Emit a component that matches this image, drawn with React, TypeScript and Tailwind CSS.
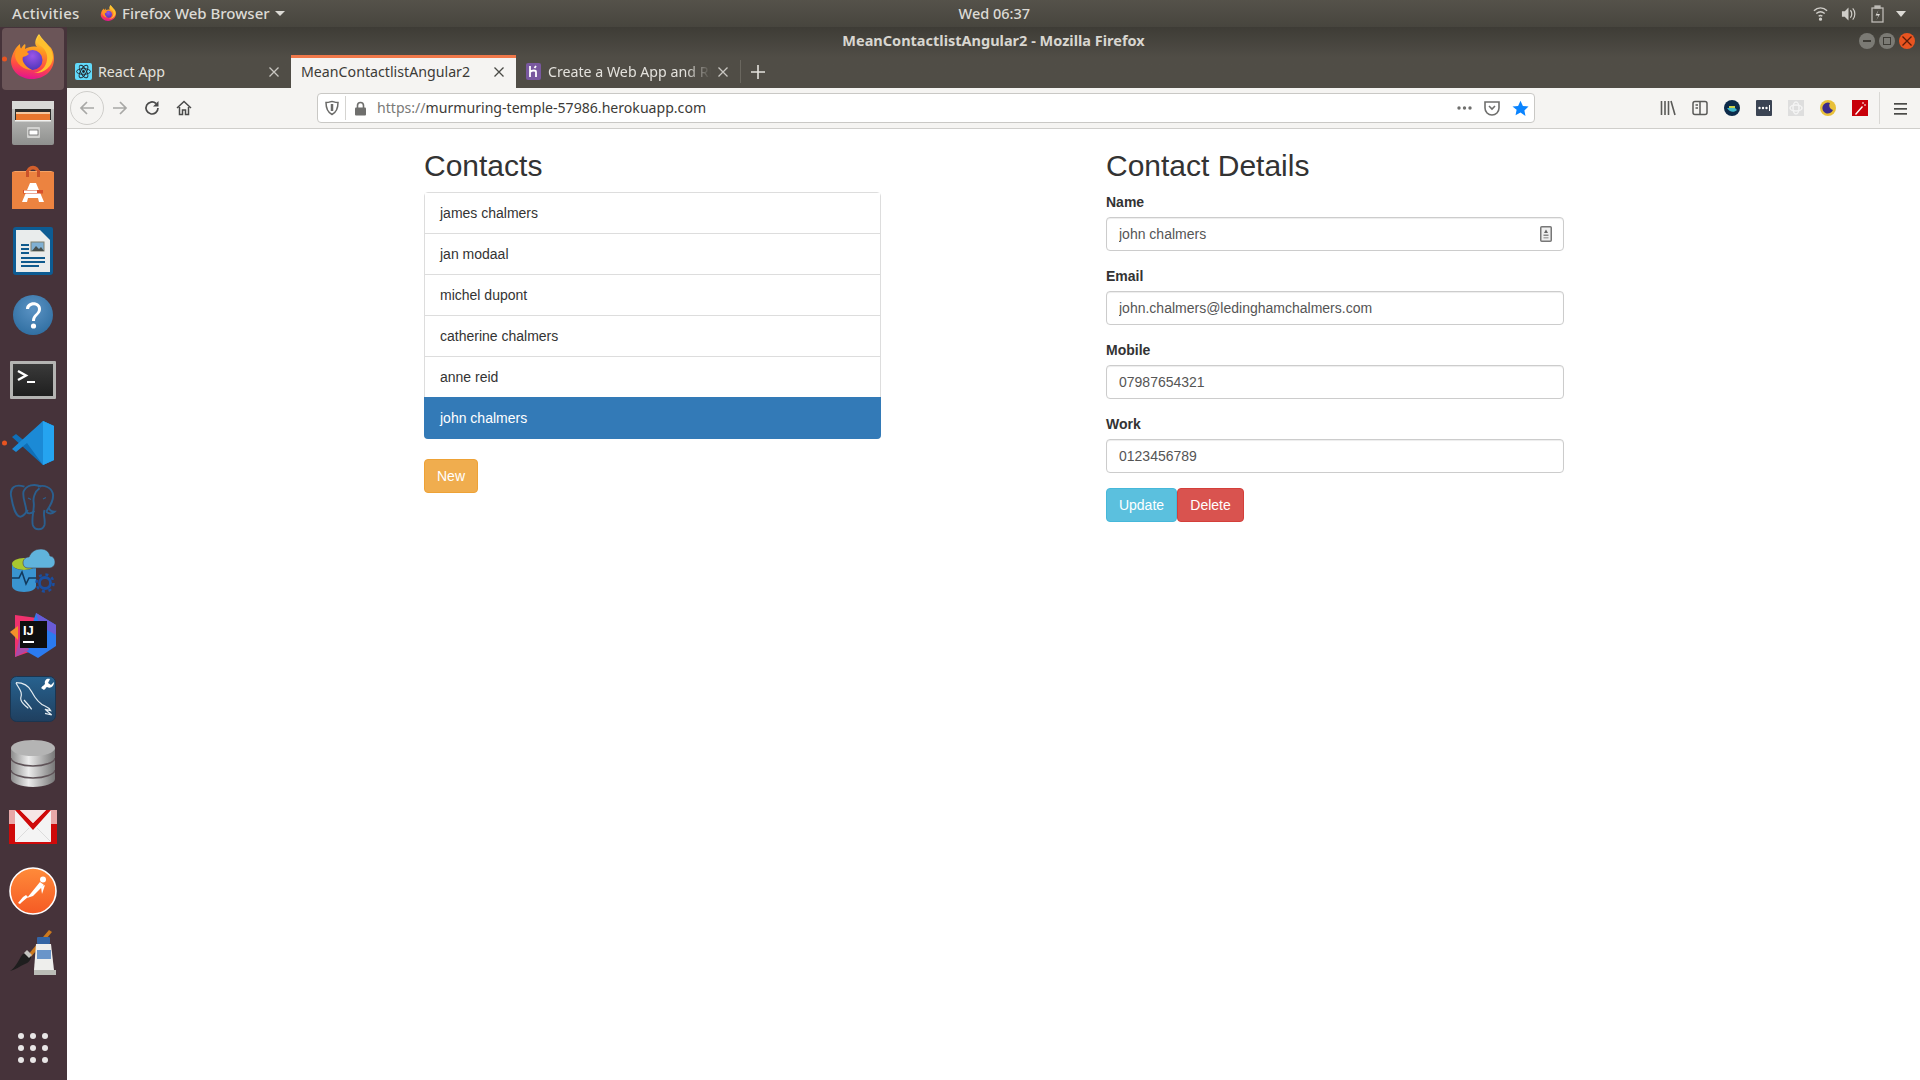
import type { ReactNode } from 'react'

const contacts = ['james chalmers', 'jan modaal', 'michel dupont', 'catherine chalmers', 'anne reid']

const fields = [
  { label: 'Name', value: 'john chalmers' },
  { label: 'Email', value: 'john.chalmers@ledinghamchalmers.com' },
  { label: 'Mobile', value: '07987654321' },
  { label: 'Work', value: '0123456789' },
]

function FirefoxIcon({ size }: { size: number }) {
  const id = `ff${size}`
  return (
    <svg width={size} height={size} viewBox="0 0 48 48">
      <defs>
        <linearGradient id={`${id}a`} x1="0.6" y1="0" x2="0.45" y2="1">
          <stop offset="0" stopColor="#ffe04a" />
          <stop offset="0.35" stopColor="#ff9a1f" />
          <stop offset="0.72" stopColor="#ff4a45" />
          <stop offset="1" stopColor="#e3148e" />
        </linearGradient>
        <radialGradient id={`${id}b`} cx="0.5" cy="0.3" r="0.75">
          <stop offset="0" stopColor="#9a55e8" />
          <stop offset="1" stopColor="#4a35b8" />
        </radialGradient>
      </defs>
      <path
        d="M30 0C26 5 25 10 28 13c-4-1-9 0-12 2 0-2 1-3 0-5-2 1-3 3-4 5-1-2-1-4-1-5C7 13 3 19 2 27c0 10 9 18 21 18 13 0 22-9 22-20 0-6-2-11-5-13C37 8 33 5 30 0z"
        fill={`url(#${id}a)`}
      />
      <circle cx="23.500" cy="26" r="10" fill={`url(#${id}b)`} />
      <path d="M9 14c3 0 6 1 8 3l3 3c-2 2-5 3-7 3 0 5 4 10 10 13-8 0-16-6-17-14 0-3 1-6 3-8z" fill="#ff9422" />
      <path d="M30 11c6 3 9 9 8 15-1 7-6 12-13 13 9 1 18-6 19-15 0-6-3-11-7-14-2-2-5-5-7-9-2 3-2 7 0 10z" fill="#ffc02e" />
    </svg>
  )
}

function FilesIcon() {
  return (
    <svg width="42" height="44" viewBox="0 0 42 44">
      <defs>
        <linearGradient id="filesBody" x1="0" y1="0" x2="0" y2="1">
          <stop offset="0" stopColor="#c9c9c7" />
          <stop offset="1" stopColor="#8f908e" />
        </linearGradient>
      </defs>
      <rect x="0" y="0" width="42" height="44" rx="2" fill="url(#filesBody)" />
      <rect x="0" y="0" width="42" height="8" fill="#d9d9d7" />
      <rect x="3" y="8" width="36" height="11" fill="#2d2c2a" />
      <rect x="4" y="11" width="34" height="2" fill="#f6c79e" />
      <rect x="4" y="13" width="34" height="6" fill="#e8762d" />
      <rect x="3" y="19" width="36" height="1.500" fill="#f1f1ef" />
      <rect x="15" y="26" width="13" height="11" rx="1" fill="#d2d2d0" />
      <rect x="17" y="29" width="9" height="5" fill="#fff" stroke="#555" strokeWidth="0.7" />
    </svg>
  )
}

function SoftwareIcon() {
  return (
    <svg width="42" height="44" viewBox="0 0 42 44">
      <path d="M14 9c0-11 14-11 14 0v5h-3V9c0-6-8-6-8 0v5h-3z" fill="#d25f2c" />
      <rect x="0" y="7" width="42" height="37" fill="#ec8340" />
      <path d="M0 7l3-1h36l3 1z" fill="#f5a264" />
      <path d="M14 5h3v7h-3zM25 5h3v7h-3z" fill="#c9522a" />
      <path d="M18 18h6l8 19h-5l-1-4H16l-1 4h-5z" fill="#fff" />
      <rect x="11" y="25" width="20" height="3.500" fill="#d8502a" />
      <rect x="12" y="25.500" width="13" height="2.500" fill="#fff" />
    </svg>
  )
}

function WriterIcon() {
  return (
    <svg width="40" height="48" viewBox="0 0 40 48">
      <path d="M3 0h26l11 11v34a3 3 0 0 1-3 3H3a3 3 0 0 1-3-3V3a3 3 0 0 1 3-3z" fill="#0d5c93" />
      <path d="M28 0l12 12V2a2 2 0 0 0-2-2z" fill="#0d5c93" />
      <path d="M3 3h24l10 10v32H3z" fill="#e9ecec" />
      <rect x="8" y="17" width="8" height="2" fill="#0f5a8d" />
      <rect x="8" y="21" width="8" height="2" fill="#0f5a8d" />
      <rect x="8" y="25" width="8" height="2" fill="#0f5a8d" />
      <rect x="18" y="15" width="13" height="9" fill="#7fb0d4" stroke="#80806f" />
      <path d="M19 24l4-5 3 3 2-2 3 4z" fill="#47504e" />
      <rect x="8" y="30" width="24" height="2" fill="#0f5a8d" />
      <rect x="8" y="34" width="24" height="2" fill="#0f5a8d" />
      <rect x="8" y="38" width="18" height="2" fill="#0f5a8d" />
    </svg>
  )
}

function HelpIcon() {
  return (
    <svg width="40" height="40" viewBox="0 0 40 40">
      <defs>
        <radialGradient id="helpFill" cx="0.5" cy="0.35" r="0.7">
          <stop offset="0" stopColor="#5b93c4" />
          <stop offset="1" stopColor="#2e6da0" />
        </radialGradient>
      </defs>
      <circle cx="20" cy="20" r="20" fill="url(#helpFill)" />
      <path d="M13 14c0-9 15-9 15 0 0 6-6 6-6 12h-3c0-7 6-7 6-12 0-5-8-5-9 0z" fill="#fff" />
      <circle cx="20.500" cy="31" r="2.600" fill="#fff" />
    </svg>
  )
}

function TerminalIcon() {
  return (
    <svg className="mt-[2px]" width="46" height="38" viewBox="0 0 46 38">
      <defs>
        <linearGradient id="termFill" x1="0" y1="0" x2="0" y2="1">
          <stop offset="0" stopColor="#3a3a3a" />
          <stop offset="1" stopColor="#1f1f1f" />
        </linearGradient>
      </defs>
      <rect width="46" height="38" rx="1" fill="#b4b4b2" />
      <rect x="3" y="3" width="40" height="32" fill="url(#termFill)" />
      <path d="M8 10l8 4.500-8 4.500" stroke="#fff" strokeWidth="2.400" fill="none" />
      <rect x="17" y="20" width="8" height="2" fill="#fff" />
    </svg>
  )
}

function VsCodeIcon() {
  return (
    <svg width="42" height="44" viewBox="0 0 42 44">
      <path d="M31 0l11 5v34l-11 5L0 16l4-3 11 9z" fill="#0f6fb8" />
      <path d="M31 44l11-5V5L31 0 0 28l4 3 11-9z" fill="#1b8ad6" />
      <path d="M31 0l11 5v34l-11 5z" fill="#25a4f0" />
    </svg>
  )
}

function PostgresIcon() {
  return (
    <svg width="46" height="46" viewBox="0 0 46 46" fill="none" stroke="#2b5f8e" strokeWidth="1.900" overflow="visible">
      <path d="M14.500 2.700C4.500-.7-.5 4.300 1.200 12.700 2.800 22.700 6.200 32.700 10.200 32.700 13.500 32.700 15.500 29.300 17.800 26" />
      <path d="M31.200 2.700C24.500-.7 16.200 1 13.500 7.700 12.200 14.300 16.200 21 16.200 26 16.200 30.300 21.200 30.300 24.500 27" />
      <path d="M27.800 2.700C34.500.3 41.200 3.700 42.800 9.300 44.500 16 39.500 22.700 36.200 27.700" />
      <path d="M29.500 4.300C24.500 7.700 22.800 14.300 23.800 19.300 24.500 24.300 21.200 34.300 22.800 41 24.500 46.700 32.800 46.700 34.500 41 35.500 34.300 32.800 31 34.500 26" />
      <path d="M36.200 27.700C39.500 30.300 42.800 29.300 44.500 27.700 41.200 27.700 39.500 26 38.800 23.700" />
      <path d="M18 14l3 1.500" strokeWidth="1.200" />
      <path d="M33 15l3-1.500" strokeWidth="1.200" />
    </svg>
  )
}

function AzureDataIcon() {
  return (
    <svg width="44" height="44" viewBox="0 0 44 44">
      <ellipse cx="13" cy="15" rx="12" ry="6" fill="#a9c72f" />
      <path d="M1 15c0 3 5 6 12 6s12-3 12-6v22c0 3-5 6-12 6S1 40 1 37z" fill="#3a94d0" />
      <path d="M1 29h7l3-6 4 12 3-6h7" stroke="#123a5e" strokeWidth="1.600" fill="none" />
      <path d="M12 14c0-4 3-6 6-6 2-5 6-8 12-8 5 0 8 3 9 7 3 0 5 3 5 6 0 4-3 6-6 6H17c-3 0-5-2-5-5z" fill="#60b3dc" stroke="#4d3a42" strokeWidth="0.6" />
      <circle cx="34" cy="34" r="5.500" fill="none" stroke="#1a4fa0" strokeWidth="2.800" />
      <circle cx="34" cy="34" r="8.500" fill="none" stroke="#1a4fa0" strokeWidth="2.500" strokeDasharray="3 3.700" />
    </svg>
  )
}

function IdeaIcon() {
  return (
    <svg width="46" height="46" viewBox="0 0 46 46">
      <path d="M5 3l22 3-8 34-14 5z" fill="#f0326e" />
      <path d="M26 1l20 12v21L28 46 14 38z" fill="#2b7bf0" />
      <path d="M26 1l20 12v10L30 14z" fill="#6a5bd6" />
      <path d="M0 20l8-6v14z" fill="#f2922a" />
      <path d="M5 45l6-25 8 18z" fill="#a94ba8" />
      <rect x="10" y="9" width="27" height="27" fill="#0e0e0e" />
      <text x="13" y="23" fill="#fff" fontSize="13" fontWeight="700" fontFamily="'Liberation Sans', sans-serif">IJ</text>
      <rect x="13" y="29" width="11" height="2" fill="#fff" />
    </svg>
  )
}

function WorkbenchIcon() {
  return (
    <svg width="46" height="46" viewBox="0 0 46 46">
      <defs>
        <linearGradient id="wbFill" x1="0" y1="0" x2="0" y2="1">
          <stop offset="0" stopColor="#27628f" />
          <stop offset="1" stopColor="#1f3f5f" />
        </linearGradient>
      </defs>
      <rect x="0.500" y="0.500" width="45" height="45" rx="6" fill="url(#wbFill)" stroke="#1b3550" />
      <g fill="none" stroke="#e3ebf0" strokeWidth="1.200">
        <path d="M6 6.700C11.700 6.700 18.300 9 21.700 15.700 25 22 28.300 27.300 35 30 38.300 31.300 40 33.300 40.700 34.700L35 33.300 41.700 39 35 37.300" />
        <path d="M6 6.700C8.300 12.300 13.300 15.700 10.700 22.300 10.700 27.300 15 29 18.300 32.300" />
        <path d="M14 24C16.700 27 20 30.700 21.700 33.300" />
      </g>
      <path d="M44 6l-3 3-3-2 2-4c-3-1-6 1-5 5L32 11l2 2 3-2c4 2 7-1 7-5z" fill="#fff" />
      <path d="M33 10l-2 2 3 2 2-2z" fill="#fff" />
    </svg>
  )
}

function DiskIcon() {
  return (
    <svg width="44" height="47" viewBox="0 0 44 47">
      <defs>
        <linearGradient id="diskFill" x1="0" y1="0" x2="1" y2="0">
          <stop offset="0" stopColor="#8c8c8c" />
          <stop offset="0.4" stopColor="#ececec" />
          <stop offset="1" stopColor="#777" />
        </linearGradient>
      </defs>
      <path d="M0 8v31c0 4 10 8 22 8s22-4 22-8V8z" fill="url(#diskFill)" />
      <ellipse cx="22" cy="8" rx="22" ry="8" fill="#b4b4b4" />
      <path d="M0 18c0 4 10 8 22 8s22-4 22-8" stroke="#5f5358" strokeWidth="1.500" fill="none" />
      <path d="M0 30c0 4 10 8 22 8s22-4 22-8" stroke="#5f5358" strokeWidth="1.500" fill="none" />
    </svg>
  )
}

function GmailIcon() {
  return (
    <svg width="48" height="34" viewBox="0 0 48 34">
      <rect width="48" height="34" fill="#f4f4f4" />
      <path d="M0 0h6v32h36V0h6v34H0z" fill="#cf0a0a" />
      <path d="M0 0h6v14H0zM48 0h-6v14h6z" fill="#e8a8a8" />
      <path d="M6 0h5l13 13L37 0h5L24 20z" fill="#cf0a0a" />
      <path d="M11 0h26L24 13z" fill="#f6e6e6" />
      <path d="M6 32l14-14M42 32L28 18" stroke="#dcdcdc" strokeWidth="1" />
    </svg>
  )
}

function PostmanIcon() {
  return (
    <svg width="48" height="48" viewBox="0 0 48 48">
      <defs>
        <linearGradient id="pmFill" x1="0" y1="0" x2="0" y2="1">
          <stop offset="0" stopColor="#ff8b3a" />
          <stop offset="1" stopColor="#f55a24" />
        </linearGradient>
      </defs>
      <circle cx="24" cy="24" r="23" fill="url(#pmFill)" stroke="#fff" strokeWidth="1.600" />
      <circle cx="34" cy="12.500" r="3" fill="#fff" />
      <path d="M31 15l4 3-11 11-6 2z" fill="#fff" />
      <path d="M19 30l-6 5-2 2-2-1 5-6 3-2z" fill="#fff" />
      <path d="M36 18l-3 9-1-7z" fill="#fff" />
    </svg>
  )
}

function PaintIcon() {
  return (
    <svg className="-mt-1" width="46" height="46" viewBox="0 0 46 46">
      <path d="M39 0L17 26l3 2L42 2z" fill="#cc7a1e" />
      <path d="M12 25c3-3 8-1 9 2 0 3-3 6-6 7-5 2-10 6-15 7 6-4 8-10 12-16z" fill="#1e1e1e" />
      <path d="M14 23l3-3 5 5-3 3z" fill="#c4c4c0" />
      <rect x="27" y="7" width="13" height="7" rx="1" fill="#3465a4" />
      <path d="M26 14h15l3 26H24z" fill="#eeeeec" />
      <rect x="27" y="20" width="14" height="9" fill="#6a95c9" />
      <rect x="24" y="40" width="22" height="5" fill="#babdb6" />
    </svg>
  )
}

function DockItem({ children, dot, active }: { children: ReactNode; dot?: boolean; active?: boolean }) {
  return (
    <div className="relative flex h-16 w-full shrink-0 items-center justify-center">
      {active ? <div className="absolute inset-x-[2px] inset-y-[1px] rounded bg-[#6b5558]" /> : null}
      {dot ? <span className="absolute left-[2px] top-1/2 h-[5px] w-[5px] -translate-y-1/2 rounded-full bg-[#e95420]" /> : null}
      <div className="relative">{children}</div>
    </div>
  )
}

function Dock() {
  return (
    <aside className="flex w-[67px] shrink-0 flex-col bg-[#46333a] pr-px">
      <DockItem active dot>
        <div className="-mt-[2px]">
          <FirefoxIcon size={48} />
        </div>
      </DockItem>
      <DockItem><FilesIcon /></DockItem>
      <DockItem><SoftwareIcon /></DockItem>
      <DockItem><WriterIcon /></DockItem>
      <DockItem><HelpIcon /></DockItem>
      <DockItem><TerminalIcon /></DockItem>
      <DockItem dot><VsCodeIcon /></DockItem>
      <DockItem><PostgresIcon /></DockItem>
      <DockItem><AzureDataIcon /></DockItem>
      <DockItem><IdeaIcon /></DockItem>
      <DockItem><WorkbenchIcon /></DockItem>
      <DockItem><DiskIcon /></DockItem>
      <DockItem><GmailIcon /></DockItem>
      <DockItem><PostmanIcon /></DockItem>
      <DockItem><PaintIcon /></DockItem>
      <div className="mt-[46px] grid w-fit grid-cols-3 gap-[6px] self-center">
        {Array.from({ length: 9 }).map((_, index) => (
          <span key={index} className="h-[6px] w-[6px] rounded-full bg-[#e8e6e6]" />
        ))}
      </div>
    </aside>
  )
}

function TopBar() {
  return (
    <header className="flex h-[27px] shrink-0 items-center bg-gradient-to-b from-[#55524a] to-[#47453e] pl-3 text-[15px] font-medium text-[#dcdad5]">
      <span className="w-[88px] tracking-[0.3px]">Activities</span>
      <FirefoxIcon size={17} />
      <span className="ml-[5px]">Firefox Web Browser</span>
      <span className="ml-[5px] h-0 w-0 border-x-[5px] border-t-[5px] border-x-transparent border-t-[#dcdad5]" />
      <span className="ml-[674px] text-[14.500px]">Wed 06:37</span>
      <div className="ml-auto flex items-center pr-[14px]">
        <svg width="15" height="15" viewBox="0 0 16 16" fill="none" stroke="#cfcdc8" strokeWidth="1.500">
          <path d="M1 5c4-4 10-4 14 0M3.500 8c3-2.500 6-2.500 9 0M6 11c1.300-1 2.700-1 4 0" />
          <circle cx="8" cy="14" r="1" fill="#cfcdc8" />
        </svg>
        <svg className="ml-[13px]" width="15" height="16" viewBox="0 0 16 16" fill="#cfcdc8">
          <path d="M1 5h3l4-4v14l-4-4H1z" />
          <path d="M10 4c2 2 2 6 0 8M12.500 2c3 3 3 9 0 12" fill="none" stroke="#cfcdc8" strokeWidth="1.300" />
        </svg>
        <svg className="ml-[15px]" width="13" height="18" viewBox="0 0 13 18" fill="none" stroke="#bdbbb6" strokeWidth="1.300">
          <rect x="1" y="3" width="11" height="14" />
          <rect x="4" y="1" width="5" height="2" fill="#bdbbb6" />
          <path d="M7.500 5L4.500 10.500h3L5.500 15l3.500-6H6z" fill="#dcdad5" stroke="none" />
        </svg>
        <span className="ml-[12px] h-0 w-0 border-x-[5px] border-t-[6px] border-x-transparent border-t-[#dcdad5]" />
      </div>
    </header>
  )
}

function ReactFavicon() {
  return (
    <svg width="17" height="17" viewBox="0 0 17 17">
      <rect width="17" height="17" rx="2" fill="#61dafb" />
      <g fill="none" stroke="#20232a" strokeWidth="0.900">
        <ellipse cx="8.500" cy="8.500" rx="7" ry="2.800" />
        <ellipse cx="8.500" cy="8.500" rx="7" ry="2.800" transform="rotate(60 8.500 8.500)" />
        <ellipse cx="8.500" cy="8.500" rx="7" ry="2.800" transform="rotate(120 8.500 8.500)" />
      </g>
      <circle cx="8.500" cy="8.500" r="1.400" fill="#20232a" />
    </svg>
  )
}

function HerokuFavicon() {
  return (
    <svg width="15" height="17" viewBox="0 0 15 17">
      <rect width="15" height="17" rx="2" fill="#79589f" />
      <path d="M4 3v11M4 9c2-2 6-2 6 0v5M10 3l-1.500 2" stroke="#fff" strokeWidth="1.800" fill="none" />
    </svg>
  )
}

function CloseX({ color }: { color: string }) {
  return (
    <svg width="10" height="10" viewBox="0 0 10 10" stroke={color} strokeWidth="1.300">
      <path d="M0.500 0.500l9 9M9.500 0.500l-9 9" />
    </svg>
  )
}

function WindowButton({ bg, children }: { bg: string; children: ReactNode }) {
  return (
    <span className={`flex h-4 w-4 items-center justify-center rounded-full ${bg}`}>{children}</span>
  )
}

function TitleBar() {
  return (
    <div className="flex h-[61px] shrink-0 flex-col bg-gradient-to-b from-[#3e3c36] via-[#504d46] to-[#504d46]">
      <div className="relative flex h-[26px] shrink-0 items-center justify-center pt-px text-[14.500px] font-bold text-[#d8d6d0]">
        MeanContactlistAngular2 - Mozilla Firefox
        <div className="absolute right-[5px] top-[6px] flex gap-[4px]">
          <WindowButton bg="bg-[#7b7a74]">
            <span className="h-[1.5px] w-2 bg-[#3e3c36]" />
          </WindowButton>
          <WindowButton bg="bg-[#7b7a74]">
            <span className="h-2 w-2 border border-[#3e3c36]" />
          </WindowButton>
          <WindowButton bg="bg-[#e95420]">
            <CloseX color="#5a1c08" />
          </WindowButton>
        </div>
      </div>
      <div className="mt-[2px] flex flex-1 items-stretch text-[14.200px] text-[#e4e2dd]">
        <div className="flex w-[224px] items-center pl-2 pr-[12px]">
          <ReactFavicon />
          <span className="ml-[6px] flex-1">React App</span>
          <CloseX color="#c9c7c2" />
        </div>
        <div className="relative flex w-[225px] items-center bg-[#f5f4f2] pl-[10px] pr-[12px] text-[#3c3b37]">
          <div className="absolute inset-x-0 top-0 h-[3px] bg-[#f0784a]" />
          <span className="flex-1">MeanContactlistAngular2</span>
          <CloseX color="#4a4a46" />
        </div>
        <div className="flex w-[224px] items-center pl-[10px] pr-[12px]">
          <HerokuFavicon />
          <span className="ml-[7px] whitespace-nowrap [mask-image:linear-gradient(to_right,black_82%,transparent_97%)]">
            Create a Web App and RE
          </span>
          <span className="ml-auto">
            <CloseX color="#c9c7c2" />
          </span>
        </div>
        <div className="my-[5px] w-px bg-[#6a675f]" />
        <div className="ml-[10px] flex items-center">
          <svg width="14" height="14" viewBox="0 0 14 14" stroke="#e4e2dd" strokeWidth="1.600">
            <path d="M7 0v14M0 7h14" />
          </svg>
        </div>
      </div>
    </div>
  )
}

function Toolbar() {
  return (
    <div className="flex h-[41px] shrink-0 items-center border-b border-[#cfcecb] bg-[#f5f4f2]">
      <div className="ml-[3px] flex h-[34px] w-[34px] items-center justify-center rounded-full border border-[#cfcecb]">
        <svg width="16" height="16" viewBox="0 0 16 16" fill="none" stroke="#a8a8a6" strokeWidth="1.700">
          <path d="M15 8H2M8 2L2 8l6 6" />
        </svg>
      </div>
      <svg className="ml-2" width="16" height="16" viewBox="0 0 16 16" fill="none" stroke="#a8a8a6" strokeWidth="1.700">
        <path d="M1 8h13M8 2l6 6-6 6" />
      </svg>
      <svg className="ml-4" width="16" height="16" viewBox="0 0 16 16" fill="none" stroke="#4a4a4a" strokeWidth="1.700">
        <path d="M14 8a6 6 0 1 1-2-4.500" />
        <path d="M14.500 1v5.500H9" fill="#4a4a4a" stroke="none" />
      </svg>
      <svg className="ml-4" width="16" height="16" viewBox="0 0 16 16" fill="none" stroke="#4a4a4a" strokeWidth="1.500">
        <path d="M1 8l7-6.500L15 8M3.500 7v7.500h3V10h3v4.500h3V7" />
      </svg>
      <div className="ml-[125px] flex h-[30px] w-[1218px] items-center rounded border border-[#c9c8c5] bg-white">
        <svg className="ml-[7px]" width="14" height="16" viewBox="0 0 14 16" fill="none" stroke="#6a6a68" strokeWidth="1.500">
          <path d="M1 2.500c4 0 4-1 6-1s2 1 6 1c0 7-2 10-6 12-4-2-6-5-6-12z" />
          <path d="M7 4v7" strokeWidth="2.500" />
        </svg>
        <span className="ml-[6px] h-[24px] w-px bg-[#d5d4d1]" />
        <svg className="ml-[8px]" width="13" height="15" viewBox="0 0 13 15">
          <path d="M3.500 7V4.500a3 3 0 0 1 6 0V7" stroke="#6f6f6d" strokeWidth="1.600" fill="none" />
          <rect x="1" y="6.500" width="11" height="8" rx="1" fill="#6f6f6d" />
        </svg>
        <span className="ml-[10px] text-[14.100px] text-[#3c3b37]">
          <span className="text-[#7a7a78]">https://</span>murmuring-temple-57986.herokuapp.com
        </span>
        <div className="ml-auto flex items-center pr-[5px]">
          <svg width="15" height="4" viewBox="0 0 15 4" fill="#6f6f6d">
            <circle cx="2" cy="2" r="1.700" />
            <circle cx="7.500" cy="2" r="1.700" />
            <circle cx="13" cy="2" r="1.700" />
          </svg>
          <svg className="ml-[12px]" width="16" height="16" viewBox="0 0 16 16" fill="none" stroke="#6f6f6d" strokeWidth="1.600">
            <path d="M1 2h14v6a7 7 0 0 1-14 0z" />
            <path d="M5 6l3 3 3-3" />
          </svg>
          <svg className="ml-[12px]" width="17" height="17" viewBox="0 0 24 24" fill="#0a84ff">
            <path d="M12 1l3.400 7.300 7.900 1-5.800 5.400 1.500 7.900L12 17.800l-7 3.800 1.500-7.900L.7 9.300l7.900-1z" />
          </svg>
        </div>
      </div>
      <div className="ml-[125px] flex items-center gap-4">
        <svg width="16" height="16" viewBox="0 0 16 16" stroke="#5a5a58" strokeWidth="1.600" fill="none">
          <path d="M1.500 1v14M5 1v14M8.500 1v14M11 1l4 14" />
        </svg>
        <svg width="16" height="16" viewBox="0 0 16 16" stroke="#5a5a58" strokeWidth="1.500" fill="none">
          <rect x="1" y="1.500" width="14" height="13" rx="2" />
          <path d="M8 1.500v13M3.500 5H6M3.500 8H6" />
        </svg>
        <svg width="16" height="16" viewBox="0 0 16 16">
          <circle cx="8" cy="8" r="8" fill="#0c2a4a" />
          <path d="M3 8h8l2 2c-3 3-8 2-10-2z" fill="#3fb6c9" />
          <path d="M5 6h6v2H5z" fill="#c9cf4a" />
        </svg>
        <svg width="16" height="16" viewBox="0 0 16 16">
          <rect width="16" height="16" rx="1" fill="#3b4454" />
          <circle cx="3.500" cy="8" r="1.200" fill="#fff" />
          <circle cx="7" cy="8" r="1.200" fill="#fff" />
          <circle cx="10.500" cy="8" r="1.200" fill="#fff" />
          <rect x="13" y="5" width="1" height="6" fill="#fff" />
        </svg>
        <svg width="16" height="16" viewBox="0 0 16 16">
          <rect width="16" height="16" fill="#dedede" />
          <g fill="none" stroke="#f4f4f4" strokeWidth="1.500">
            <ellipse cx="8" cy="8" rx="6" ry="3" />
            <ellipse cx="8" cy="8" rx="3" ry="6" />
          </g>
        </svg>
        <svg width="16" height="16" viewBox="0 0 16 16">
          <circle cx="8" cy="8" r="8" fill="#e8c03a" />
          <path d="M10 3a5.500 5.500 0 1 0 3 7 4.500 4.500 0 0 1-3-7z" fill="#3b2a8c" />
        </svg>
        <svg width="16" height="16" viewBox="0 0 16 16">
          <rect width="16" height="16" fill="#c8000a" />
          <path d="M3 14l7-8 1 1-7 8z" fill="#fff" />
          <path d="M11 2l1 1-1 1-1-1zM13 4l1 1-1 1-1-1z" fill="#fff" />
        </svg>
      </div>
      <span className="ml-[11px] h-8 w-px bg-[#d9d8d5]" />
      <svg className="ml-[14px]" width="13" height="13" viewBox="0 0 13 13" fill="#4a4a48">
        <rect y="1" width="13" height="1.700" />
        <rect y="6" width="13" height="1.700" />
        <rect y="11" width="13" height="1.700" />
      </svg>
    </div>
  )
}

function ContactList() {
  return (
    <section className="w-[457px]">
      <h2 className="mt-5 mb-[10px] text-[30px] leading-[33px] text-[#333]">Contacts</h2>
      <ul className="rounded border border-[#ddd] text-[#333]">
        {contacts.map((name, index) => (
          <li
            key={name}
            className={
              index === contacts.length - 1
                ? 'h-[40px] bg-white px-[15px] py-[10px] leading-5'
                : 'h-[41px] border-b border-[#ddd] bg-white px-[15px] py-[10px] leading-5'
            }
          >
            {name}
          </li>
        ))}
        <li className="-mx-px -mb-px h-[42px] rounded-b bg-[#337ab7] px-[16px] pt-[11px] leading-5 text-white">john chalmers</li>
      </ul>
      <button className="mt-5 h-[34px] w-[54px] rounded border border-[#eea236] bg-[#f0ad4e] leading-5 text-white">
        New
      </button>
    </section>
  )
}

function ContactDetails() {
  return (
    <section className="ml-[225px] w-[458px]">
      <h2 className="mt-5 mb-[10px] text-[30px] leading-[33px] text-[#333]">Contact Details</h2>
      <form className="flex flex-col">
        {fields.map((field, index) => (
          <div key={field.label} className="mb-[15px]">
            <label className="mb-[5px] block leading-5 font-bold text-[#333]">{field.label}</label>
            <div className="relative">
              <input
                readOnly
                value={field.value}
                className="h-[34px] w-full rounded border border-[#ccc] bg-white px-3 text-[#555] shadow-[inset_0_1px_1px_rgba(0,0,0,0.075)] outline-none"
              />
              {index === 0 ? (
                <svg className="absolute right-[12px] top-[9px]" width="12" height="16" viewBox="0 0 12 16">
                  <rect x="0.750" y="0.750" width="10.500" height="14.500" rx="1" fill="#efefef" stroke="#777" strokeWidth="1.500" />
                  <path d="M6 3.500l2 3.500H4z" fill="#666" />
                  <rect x="3.500" y="8.500" width="5" height="1.500" fill="#888" />
                  <rect x="3.500" y="11" width="5" height="1.500" fill="#aaa" />
                </svg>
              ) : null}
            </div>
          </div>
        ))}
        <div className="flex">
          <button type="button" className="h-[34px] w-[71px] rounded border border-[#46b8da] bg-[#5bc0de] text-white">
            Update
          </button>
          <button type="button" className="h-[34px] w-[67px] rounded border border-[#d43f3a] bg-[#d9534f] text-white">
            Delete
          </button>
        </div>
      </form>
    </section>
  )
}

export default function App() {
  return (
    <div className="flex h-screen w-full flex-col overflow-hidden bg-white font-['Noto_Sans',sans-serif]">
      <TopBar />
      <div className="flex min-h-0 flex-1">
        <Dock />
        <div className="flex min-w-0 flex-1 flex-col">
          <TitleBar />
          <Toolbar />
          <main className="flex flex-1 pl-[357px] font-['Liberation_Sans',sans-serif] text-[14px]">
            <ContactList />
            <ContactDetails />
          </main>
        </div>
      </div>
    </div>
  )
}
